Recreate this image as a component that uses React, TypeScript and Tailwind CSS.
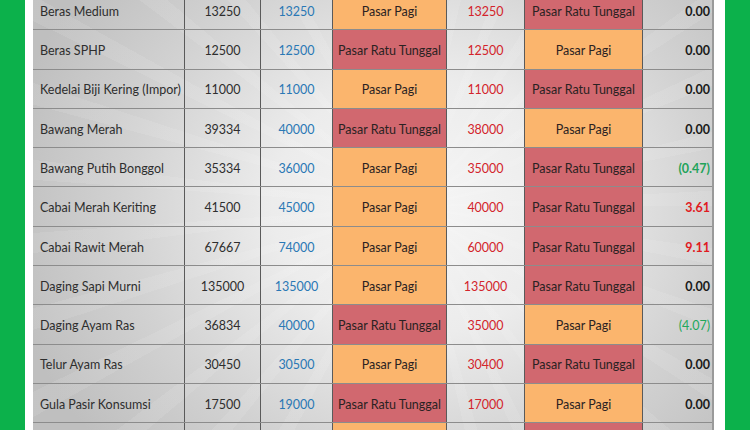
import React from "react";

type Row = {
  name: string;
  a: string;
  b: string;
  m1: "O" | "R";
  c: string;
  m2: "O" | "R";
  d: string;
  dc: "k" | "g" | "r" | "gn";
};

const rows: Row[] = [
  { name: "Beras Medium", a: "13250", b: "13250", m1: "O", c: "13250", m2: "R", d: "0.00", dc: "k" },
  { name: "Beras SPHP", a: "12500", b: "12500", m1: "R", c: "12500", m2: "O", d: "0.00", dc: "k" },
  { name: "Kedelai Biji Kering (Impor)", a: "11000", b: "11000", m1: "O", c: "11000", m2: "R", d: "0.00", dc: "k" },
  { name: "Bawang Merah", a: "39334", b: "40000", m1: "R", c: "38000", m2: "O", d: "0.00", dc: "k" },
  { name: "Bawang Putih Bonggol", a: "35334", b: "36000", m1: "O", c: "35000", m2: "R", d: "(0.47)", dc: "g" },
  { name: "Cabai Merah Keriting", a: "41500", b: "45000", m1: "O", c: "40000", m2: "R", d: "3.61", dc: "r" },
  { name: "Cabai Rawit Merah", a: "67667", b: "74000", m1: "O", c: "60000", m2: "R", d: "9.11", dc: "r" },
  { name: "Daging Sapi Murni", a: "135000", b: "135000", m1: "O", c: "135000", m2: "R", d: "0.00", dc: "k" },
  { name: "Daging Ayam Ras", a: "36834", b: "40000", m1: "R", c: "35000", m2: "O", d: "(4.07)", dc: "gn" },
  { name: "Telur Ayam Ras", a: "30450", b: "30500", m1: "O", c: "30400", m2: "R", d: "0.00", dc: "k" },
  { name: "Gula Pasir Konsumsi", a: "17500", b: "19000", m1: "R", c: "17000", m2: "O", d: "0.00", dc: "k" },
  { name: "", a: "", b: "", m1: "O", c: "", m2: "R", d: "", dc: "k" },
];

function Market({ k, show }: { k: "O" | "R"; show: boolean }) {
  return (
    <div
      className={
        "flex items-center justify-center whitespace-nowrap border-r border-[#5a5a5a] pt-[4px] text-[#2a2222] " +
        (k === "O" ? "bg-[#fbb56d]" : "bg-[#d1686f]")
      }
    >
      {show ? (k === "O" ? "Pasar Pagi" : "Pasar Ratu Tunggal") : ""}
    </div>
  );
}

function Diff({ v, c }: { v: string; c: Row["dc"] }) {
  const cls =
    c === "k"
      ? "font-bold text-[#1a1a1a]"
      : c === "g"
      ? "font-bold text-[#1fa35a]"
      : c === "r"
      ? "font-bold text-[#e01a1f]"
      : "text-[#22a85c]";
  return <div className={"flex items-center justify-end pr-[2px] pt-[4px] " + cls}>{v}</div>;
}

export default function App() {
  return (
    <div className="w-[750px] h-[430px] overflow-hidden bg-[#0cb14b] px-[25px] font-['Lato','Liberation_Sans',sans-serif]">
      <div className="h-full bg-white pl-[8px] pr-[11px]">
        <div className="h-full overflow-hidden border-r-2 border-[#9a9a9a] bg-[image:repeating-conic-gradient(from_10deg_at_56%_48%,rgba(255,255,255,0.09)_0deg_3deg,rgba(255,255,255,0)_3deg_11deg),radial-gradient(ellipse_62%_85%_at_57%_48%,#f6f6f6_0%,#ececec_35%,#d2d2d2_70%,#bfbfbf_100%)] text-[12.5px] text-[#333]">
          <div className="-mt-[9px]">
            {rows.map((r, i) => (
              <div
                key={i}
                className="grid h-[39.3px] grid-cols-[152px_76px_72px_114px_78px_118px_69px] border-b border-[#8c8c8c]"
              >
                <div className="flex items-center whitespace-nowrap border-r border-[#5a5a5a] pl-[7px] pt-[4px] text-[#2e2e2e]">{r.name}</div>
                <div className="flex items-center justify-center border-r border-[#5a5a5a] pt-[4px] text-[#2e2e2e]">{r.a}</div>
                <div className="flex items-center justify-center border-r border-[#5a5a5a] pt-[4px] text-[#2a78b5]">{r.b}</div>
                <Market k={r.m1} show={r.name !== ""} />
                <div className="flex items-center justify-center border-r border-[#5a5a5a] pt-[4px] text-[#d3242b]">{r.c}</div>
                <Market k={r.m2} show={r.name !== ""} />
                <Diff v={r.d} c={r.dc} />
              </div>
            ))}
          </div>
        </div>
      </div>
    </div>
  );
}
